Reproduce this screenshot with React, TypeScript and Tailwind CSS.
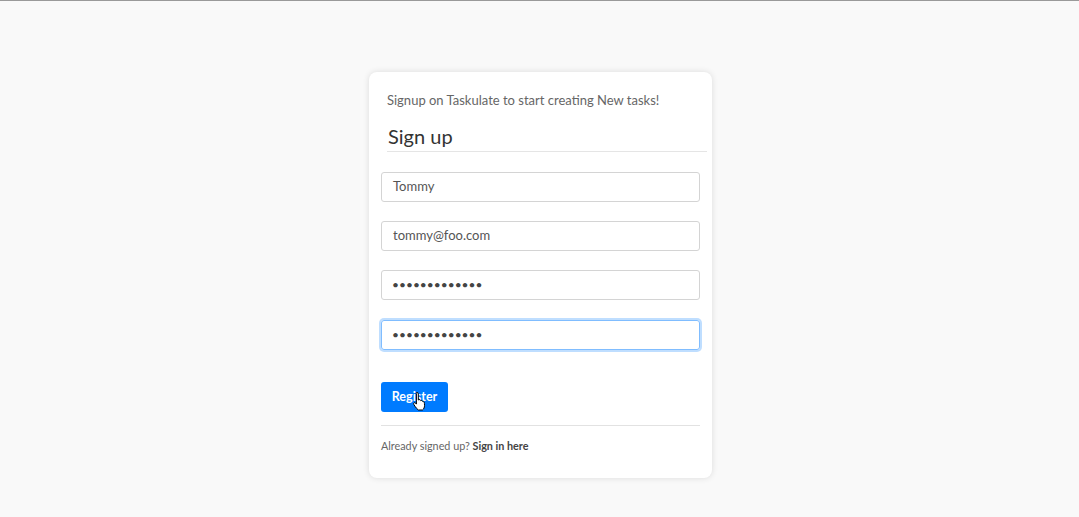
import React from "react";

export default function App() {
  return (
    <div
      className="w-[1079px] h-[517px] bg-[#f9f9f9] border-t border-[#9a9a9a] flex justify-center pl-[2px] overflow-hidden"
      style={{ fontFamily: "Lato, 'Open Sans', sans-serif" }}
    >
      <div className="mt-[71px] w-[343px] h-[406px] bg-white rounded-[8px] shadow-[0_0_6px_rgba(0,0,0,0.12)] pl-[12px] pr-[12px] flex flex-col">
        <p className="mt-[20px] ml-[6px] text-[13px] leading-[16px] text-[#666]">
          Signup on Taskulate to start creating New tasks!
        </p>
        <h2 className="mt-[16px] ml-[7px] text-[20px] leading-[24px] text-[#333]">Sign up</h2>
        <div className="mt-[3px] ml-[6px] -mr-[7px] h-px bg-[#e5e5e5]" />
        <div className="mt-[20px] flex flex-col gap-[19px]">
          <div className="h-[30px] rounded-[3px] border border-[#d4d4d4] px-[11px] flex items-center text-[13px] text-[#555]">Tommy</div>
          <div className="h-[30px] rounded-[3px] border border-[#d4d4d4] px-[11px] flex items-center text-[13px] text-[#555]">tommy@foo.com</div>
          <div className="h-[30px] rounded-[3px] border border-[#d4d4d4] px-[10px] flex items-center text-[12px] text-[#444]">•••••••••••••</div>
          <div className="mt-[1px] h-[30px] rounded-[3px] border border-[#80bdff] shadow-[0_0_0_2px_rgba(128,189,255,0.5)] px-[10px] flex items-center text-[12px] text-[#444]">•••••••••••••</div>
        </div>
        <div className="mt-[32px] relative w-[67px]">
          <div className="h-[30px] w-[67px] rounded-[3px] bg-[#007bff] text-white text-[12.5px] font-bold flex items-center justify-center">Register</div>
          <svg className="absolute left-[32px] top-[9px]" width="14" height="20" viewBox="0 0 14 20">
            <path d="M4 1.5c.8 0 1.3.6 1.3 1.3V9l.8-.4c.7-.2 1.4.2 1.5.8l.1.3c.6-.4 1.4-.2 1.7.4l.1.3c.6-.3 1.3 0 1.6.6 .3.7.4 2 .4 3.5 0 2-.7 3.5-2 4.5H5.3C4 18 3 16.7 2 15.3L.8 13.4c-.4-.6-.2-1.3.3-1.6.5-.3 1.1-.2 1.5.3l.8 1V2.8C2.7 2.1 3.2 1.5 4 1.5z" fill="#fff" stroke="#000" strokeWidth="1" />
          </svg>
        </div>
        <div className="mt-[13px] h-px bg-[#e2e2e2]" />
        <p className="mt-[13px] text-[10.8px] leading-[14px] text-[#666]">
          Already signed up? <span className="font-bold text-[#444]">Sign in here</span>
        </p>
      </div>
    </div>
  );
}
